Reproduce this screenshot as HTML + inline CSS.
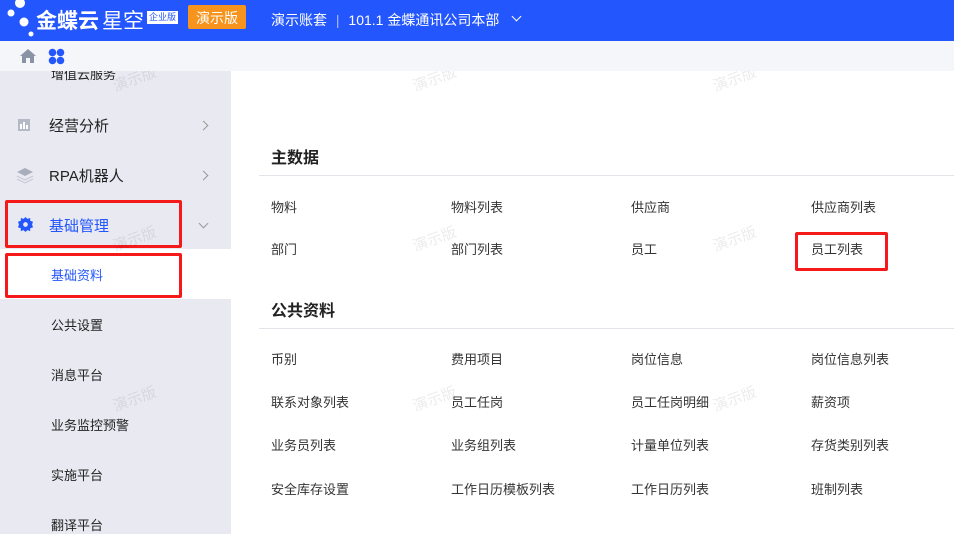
<!DOCTYPE html><html><head><meta charset="utf-8"><style>
*{margin:0;padding:0;box-sizing:border-box}
body{width:954px;height:534px;overflow:hidden;font-family:"Liberation Sans","Noto Sans CJK SC",sans-serif;background:#fff;position:relative}
.hd{position:absolute;left:0;top:0;width:954px;height:41px;background:#2456fd;color:#fff;z-index:3}
.tb{position:absolute;left:0;top:41px;width:954px;height:30px;background:#f5f6fa;z-index:2}
.sb{position:absolute;left:0;top:71px;width:231px;height:463px;background:#e9e9f2}
.t{position:absolute;white-space:nowrap}
.it{font-size:15px;color:#222}
.sub{font-size:13px;color:#222}
.c{font-size:13px;color:#333}
.h{font-size:16px;font-weight:bold;color:#222}
.line{position:absolute;left:259px;width:695px;height:1px;background:#e3e5ea}
.red{position:absolute;border:3px solid #f5191a;border-radius:2px}
.wm{position:absolute;font-size:15px;color:rgba(0,0,0,0.08);transform:rotate(-20deg)}
.arr{position:absolute;width:7px;height:7px;border-right:1px solid #999;border-top:1px solid #999;transform:rotate(45deg)}
</style></head><body>
<div class="hd">
<svg style="position:absolute;left:4px;top:0" width="30" height="38"><circle cx="16" cy="3" r="5" fill="#fff"/><circle cx="7" cy="13" r="3.5" fill="#fff"/><circle cx="20" cy="22" r="4.5" fill="#fff"/><circle cx="27" cy="34" r="2.5" fill="#fff"/></svg>
<div class="t" style="left:36px;top:5px;font-size:21px;font-weight:bold">金蝶云</div>
<div class="t" style="left:102px;top:5px;font-size:21px">星空</div>
<div class="t" style="left:147px;top:11px;font-size:9px;background:#fff;color:#2456fd;padding:0 2px;height:13px;line-height:13px">企业版</div>
<div class="t" style="left:188px;top:5px;width:58px;height:24px;background:#f7941d;border-radius:2px;font-size:14px;text-align:center;line-height:24px;padding-top:1px">演示版</div>
<div class="t" style="left:271px;top:11px;font-size:14px;line-height:18px">演示账套 <span style="opacity:.6;margin:0 5px">|</span> 101.1 金蝶通讯公司本部</div>
<div class="arr" style="left:513px;top:13px;border-color:#fff;transform:rotate(135deg)"></div>
</div>
<div class="tb">
<svg style="position:absolute;left:19px;top:7px" width="18" height="16"><path d="M1 8L9 1L17 8H15V15H11V10H7V15H3V8Z" fill="#8a93a6"/></svg>
<svg style="position:absolute;left:48px;top:7px" width="17" height="17"><circle cx="4.5" cy="4.5" r="3.8" fill="#2456fd"/><circle cx="12.5" cy="4.5" r="3.8" fill="#2456fd"/><circle cx="4.5" cy="12.5" r="3.8" fill="#2456fd"/><circle cx="12.5" cy="12.5" r="3.8" fill="#2456fd"/></svg>
</div>
<div class="sb"></div>
<div style="position:absolute;left:0;top:249px;width:231px;height:50px;background:#fff"></div>
<div class="t sub" style="left:51px;top:64px">增值云服务</div>
<svg style="position:absolute;left:17px;top:118px" width="14" height="14"><rect x="1" y="1" width="12" height="12" fill="#b5b9c6"/><rect x="3" y="6" width="2" height="5" fill="#fff"/><rect x="6" y="4" width="2" height="7" fill="#fff"/><rect x="9" y="7" width="2" height="4" fill="#fff"/></svg>
<div class="t it" style="left:49px;top:115px">经营分析</div><div class="arr" style="left:200px;top:122px"></div>
<svg style="position:absolute;left:16px;top:167px" width="18" height="17"><path d="M9 1L17 5L9 9L1 5Z" fill="#a9aebb"/><path d="M1 9L9 13L17 9M1 12L9 16L17 12" stroke="#c4c7d1" fill="none"/></svg>
<div class="t it" style="left:49px;top:165px">RPA机器人</div><div class="arr" style="left:200px;top:172px"></div>
<svg style="position:absolute;left:18px;top:217px" width="15" height="15" viewBox="0 0 16 16"><path d="M8 0l2 2 3-1 0 3 3 1-1 3 1 3-3 1 0 3-3-1-2 2-2-2-3 1 0-3-3-1 1-3-1-3 3-1 0-3 3 1z" fill="#2456fd"/><circle cx="8" cy="8" r="2.5" fill="#e9e9f2"/></svg>
<div class="t it" style="left:49px;top:215px;color:#2456fd">基础管理</div><div class="arr" style="left:200px;top:220px;transform:rotate(135deg)"></div>
<div class="t sub" style="left:51px;top:265px;color:#2456fd">基础资料</div>
<div class="t sub" style="left:51px;top:315px">公共设置</div>
<div class="t sub" style="left:51px;top:365px">消息平台</div>
<div class="t sub" style="left:51px;top:415px">业务监控预警</div>
<div class="t sub" style="left:51px;top:465px">实施平台</div>
<div class="t sub" style="left:51px;top:515px">翻译平台</div>
<div class="red" style="left:5px;top:200px;width:177px;height:48px"></div>
<div class="red" style="left:5px;top:253px;width:177px;height:45px"></div>

<div class="t h" style="left:271px;top:144px">主数据</div><div class="line" style="top:175px"></div>
<div class="t c" style="left:271px;top:197px">物料</div><div class="t c" style="left:451px;top:197px">物料列表</div><div class="t c" style="left:631px;top:197px">供应商</div><div class="t c" style="left:811px;top:197px">供应商列表</div>
<div class="t c" style="left:271px;top:239px">部门</div><div class="t c" style="left:451px;top:239px">部门列表</div><div class="t c" style="left:631px;top:239px">员工</div><div class="t c" style="left:811px;top:239px">员工列表</div>
<div class="red" style="left:795px;top:232px;width:93px;height:39px"></div>
<div class="t h" style="left:271px;top:297px">公共资料</div><div class="line" style="top:328px"></div>
<div class="t c" style="left:271px;top:349px">币别</div><div class="t c" style="left:451px;top:349px">费用项目</div><div class="t c" style="left:631px;top:349px">岗位信息</div><div class="t c" style="left:811px;top:349px">岗位信息列表</div>
<div class="t c" style="left:271px;top:392px">联系对象列表</div><div class="t c" style="left:451px;top:392px">员工任岗</div><div class="t c" style="left:631px;top:392px">员工任岗明细</div><div class="t c" style="left:811px;top:392px">薪资项</div>
<div class="t c" style="left:271px;top:435px">业务员列表</div><div class="t c" style="left:451px;top:435px">业务组列表</div><div class="t c" style="left:631px;top:435px">计量单位列表</div><div class="t c" style="left:811px;top:435px">存货类别列表</div>
<div class="t c" style="left:271px;top:479px">安全库存设置</div><div class="t c" style="left:451px;top:479px">工作日历模板列表</div><div class="t c" style="left:631px;top:479px">工作日历列表</div><div class="t c" style="left:811px;top:479px">班制列表</div>
<div class="wm" style="left:112px;top:68px">演示版</div><div class="wm" style="left:412px;top:68px">演示版</div><div class="wm" style="left:712px;top:68px">演示版</div>
<div class="wm" style="left:112px;top:228px">演示版</div><div class="wm" style="left:412px;top:228px">演示版</div><div class="wm" style="left:712px;top:228px">演示版</div>
<div class="wm" style="left:112px;top:388px">演示版</div><div class="wm" style="left:412px;top:388px">演示版</div><div class="wm" style="left:712px;top:388px">演示版</div>
</body></html>
